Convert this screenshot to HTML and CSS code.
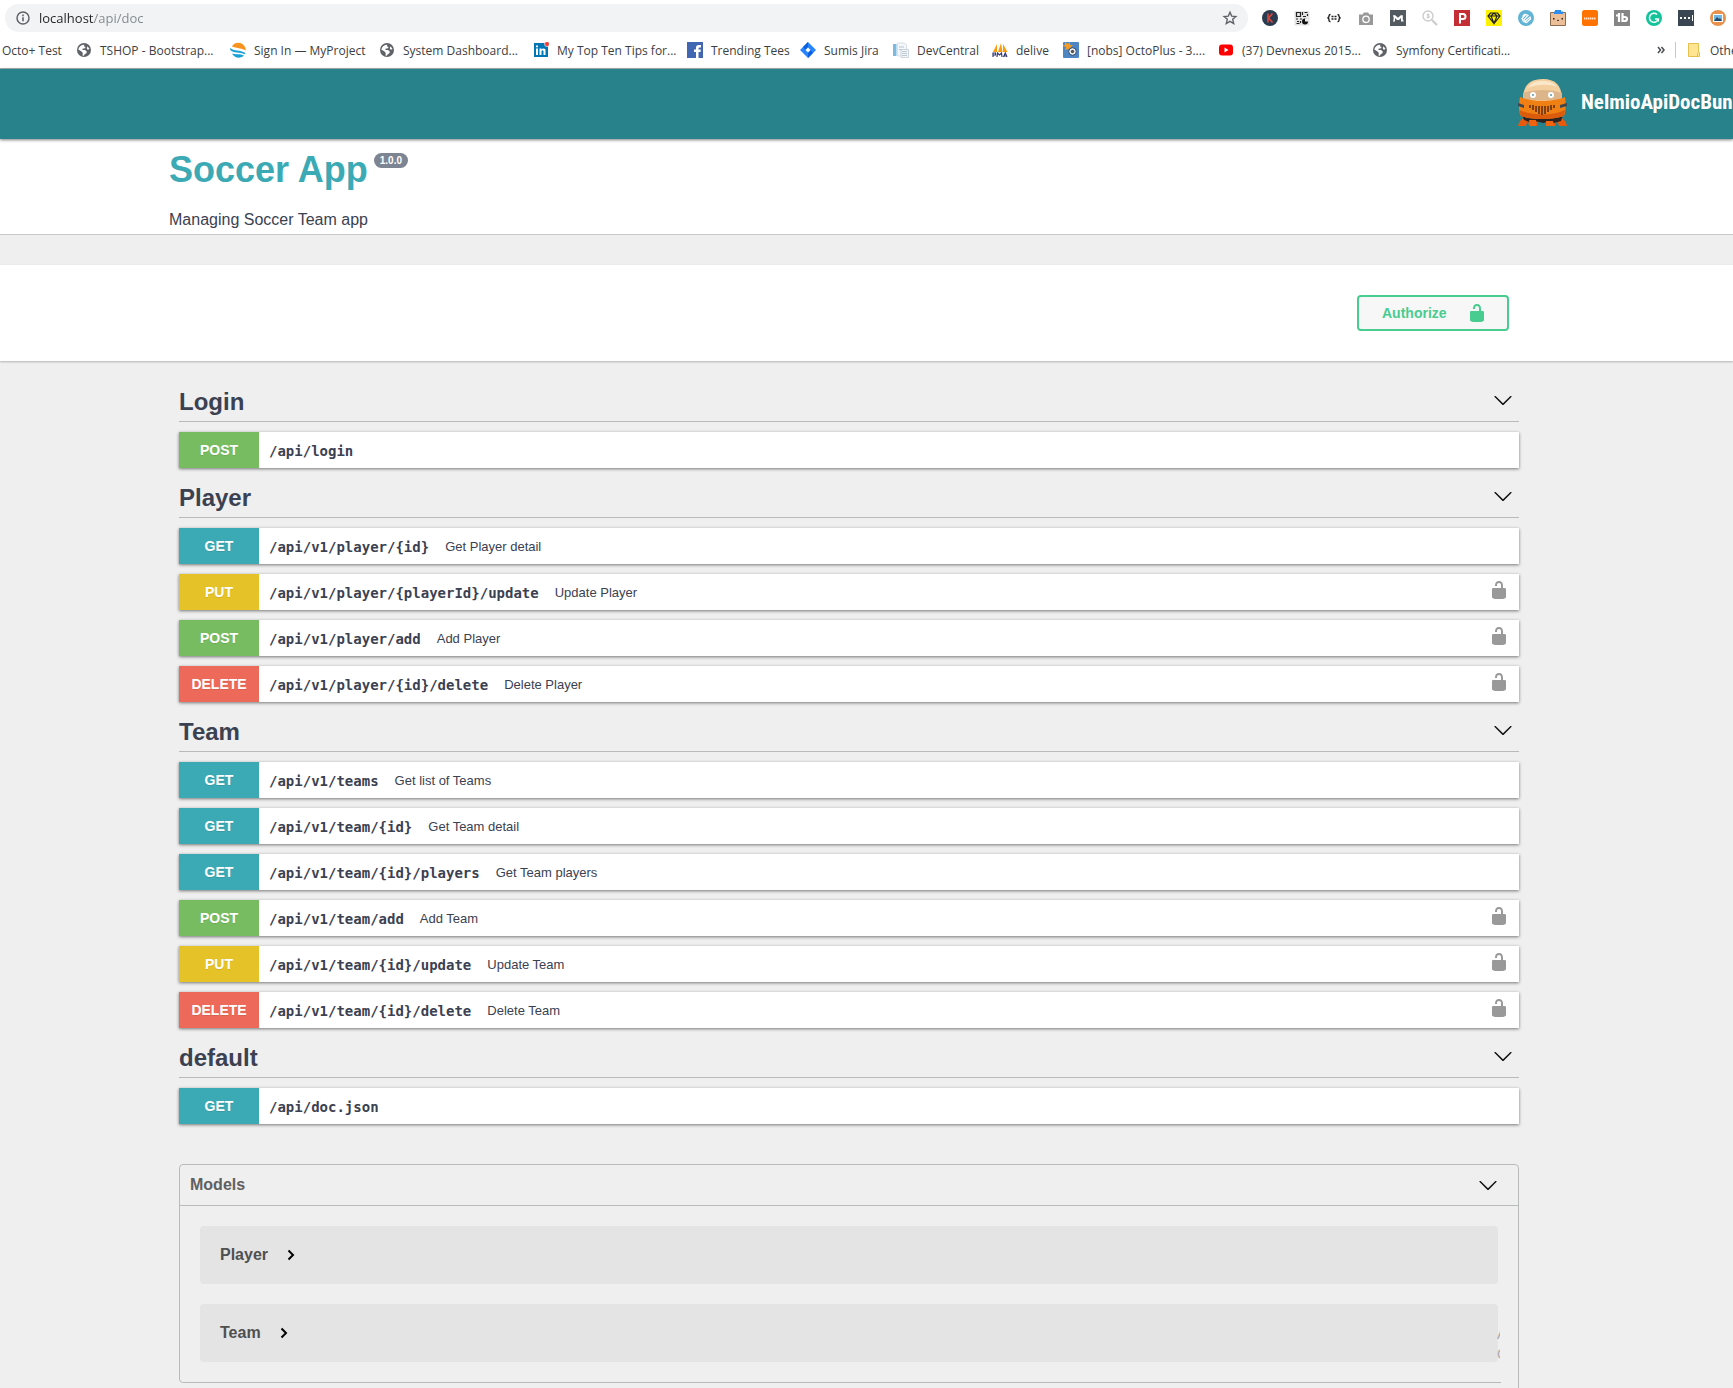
FILE: index.html
```html
<!DOCTYPE html>
<html lang="en">
<head>
<meta charset="utf-8">
<title>Soccer App</title>
<link rel="stylesheet" href="styles.css">
</head>
<body>
<svg class="sprite" aria-hidden="true">
  <symbol id="unlocked" viewBox="0 0 20 20"><path d="M15.8 8H14V5.6C14 2.703 12.665 1 10 1 7.334 1 6 2.703 6 5.6V6h2v-.801C8 3.754 8.797 3 10 3c1.203 0 2 .754 2 2.199V8H4c-.553 0-1 .646-1 1.199V17c0 .549.428 1.139.951 1.307l1.197.387C5.672 18.861 6.55 19 7.1 19h5.8c.549 0 1.428-.139 1.951-.307l1.196-.387c.524-.167.953-.757.953-1.306V9.199C17 8.646 16.352 8 15.8 8z"/></symbol>
  <symbol id="arrow-down" viewBox="0 0 20 20"><path d="M17.418 6.109c.272-.268.709-.268.979 0s.271.701 0 .969l-7.908 7.83c-.27.268-.707.268-.979 0l-7.908-7.83c-.27-.268-.27-.701 0-.969.271-.268.709-.268.979 0L10 13.25l7.418-7.141z"/></symbol>
  <symbol id="arrow-right" viewBox="0 0 10 12"><path d="M2.500 1.500 7 6l-4.500 4.500" fill="none" stroke="#000" stroke-width="2"/></symbol>
  <symbol id="globe" viewBox="0 0 16 16"><circle cx="8" cy="8" r="7" fill="#5f6368"/><path d="M2.300 7.500C3 4.500 5.500 2.600 8.500 2.700L7.800 4.200 9.500 5 9 6.300 6.500 6.800 6.400 8H9l1.800 1.500-.4 1.800-2 1.200-.4 1.300-1.500-.4.3-2.300-1.600-1.800z" fill="#fff"/><path d="M11.500 4.300 13.500 7l-1.700.8-1-1.300z" fill="#fff"/></symbol>
</svg>

<div class="browser">
  <div class="toolbar">
    <div class="omnibox">
      <svg class="icon16" viewBox="0 0 16 16"><circle cx="8" cy="8" r="6" fill="none" stroke="#5f6368" stroke-width="1.500"/><path d="M7.200 7.200h1.600v4H7.200zM7.200 4.600h1.600v1.600H7.200z" fill="#5f6368"/></svg>
      <input class="url" type="text" aria-label="Address" value="localhost/api/doc">
      <svg class="icon16" viewBox="0 0 16 16"><path d="M8 2.200 9.700 6.100l4.200.4-3.200 2.800 1 4.200L8 11.300l-3.700 2.200 1-4.200L2.100 6.500l4.200-.4z" fill="none" stroke="#5f6368" stroke-width="1.400"/></svg>
    </div>
    <div class="extensions">
      <svg class="icon16" viewBox="0 0 16 16"><circle cx="8" cy="8" r="8" fill="#2a3b4f"/><path d="M6 3.500v9M10.500 3.500 6.500 8l4 4.500" fill="none" stroke="#d9483f" stroke-width="1.600"/></svg>
      <svg class="icon16" viewBox="0 0 16 16"><path d="M.5 1h15v14.500H.5z" fill="#e4e4e4"/><path d="M2.500 2.500h4v4h-4zM8.500 2v3M10.500 2.500h3M13.500 4v2M9 6.500h3M2 9h2M6 9h2M3 11.500h2M2.500 13.500h3M6.500 11v2" fill="none" stroke="#222" stroke-width="1.200"/><circle cx="11" cy="11.500" r="3" fill="#111"/><path d="M11 8.500h3v3h-3z" fill="#eee"/></svg>
      <svg class="icon16" viewBox="0 0 16 16"><path d="M4.500 4.500Q3 4.500 3 6t-1.500 2Q3 8 3 10t1.500 1.500M11.500 4.500Q13 4.500 13 6t1.500 2Q13 8 13 10t-1.500 1.500M5.500 6.500h2M8.500 6.500h2M5.500 9h2M8.500 9h2" fill="none" stroke="#222" stroke-width="1.400"/></svg>
      <svg class="icon16" viewBox="0 0 16 16"><path d="M1 4.500h3.500L6 2.500h4l1.500 2H15V15H1z" fill="#999"/><circle cx="8" cy="9.300" r="3.200" fill="#999" stroke="#fff" stroke-width="1.300"/></svg>
      <svg class="icon16" viewBox="0 0 16 16"><path d="M0 0h16v16H0z" fill="#545b60"/><path d="M3 11.500h2V8l2 2h2l2-2v3.500h2.500v-1.200h-.7v-5h-2L8 7.800 5.200 5.300H3v1.200h.6v4H3z" fill="#fff"/></svg>
      <svg class="icon16" viewBox="0 0 16 16"><circle cx="6" cy="6" r="5" fill="none" stroke="#ccc" stroke-width="1.400"/><path d="m10 10 5 5" stroke="#ccc" stroke-width="2.200"/><path d="M7.600 4.500H5.400v1.500h1.800v1.600H4.600M6 3.300v5.400" fill="none" stroke="#ccc"/></svg>
      <svg class="icon16" viewBox="0 0 16 16"><path d="M0 0h16v16H0z" fill="#c32f35"/><path d="M6 13.500V4h3q2.500 0 2.500 2.500T9 9H6" fill="none" stroke="#fff" stroke-width="2"/></svg>
      <svg class="icon16" viewBox="0 0 16 16"><path d="M0 0h16v16H0z" fill="#fff200"/><path d="M4.500 3h7L14 6l-6 7.500L2 6zM2 6h12M5 6l3 7.500L11 6 8 3 5 6" fill="none" stroke="#222" stroke-width="1.200"/></svg>
      <svg class="icon16" viewBox="0 0 16 16"><circle cx="8" cy="8" r="8" fill="#62b4d6"/><path d="m4 8.500 4-4 2 1-4 4 1.500 1.500 4.500-4 .5 2-4 3.500-3-1zM4.500 6.500 7 4" fill="none" stroke="#fff" stroke-width="1.200"/></svg>
      <svg class="icon16" viewBox="0 0 16 16"><path d="M.5 2.500h15v13H.5z" fill="#edbf98" stroke="#8d6c50"/><path d="M5 0h6v1.500h2V4H4V1.500h1z" fill="#2d8cf0"/><path d="M3 8h1.500v1.500H3zM11.500 8H13v1.500h-1.500z" fill="#222"/><path d="m7 10 1 .8 1-.8" fill="none" stroke="#333"/></svg>
      <svg class="icon16" viewBox="0 0 16 16"><rect width="16" height="16" rx="2.500" fill="#ff7300"/><path d="M2 8.500h12" stroke="#ffe3cc" stroke-width="2" stroke-dasharray="1.500 .5"/></svg>
      <svg class="icon16" viewBox="0 0 16 16"><path d="M0 0h16v16H0z" fill="#858585"/><path d="M2 5.500h3M5 3v9M8.500 3v8h2q2.500 0 2.500-2T10.500 7H8.500" fill="none" stroke="#fff" stroke-width="2.200"/></svg>
      <svg class="icon16" viewBox="0 0 16 16"><circle cx="8" cy="8" r="8" fill="#15c39a"/><path d="M11 4.500A4.500 4.500 0 1 0 12.300 9H9M12.300 8.500v3" fill="none" stroke="#fff" stroke-width="1.500"/></svg>
      <svg class="icon16" viewBox="0 0 16 16"><path d="M0 0h16v16H0z" fill="#3a4651"/><path d="M2 7h2v2H2zM6 7h2v2H6zM10 7h2v2h-2zM14 5h1v6h-1z" fill="#fff"/></svg>
      <svg class="icon16" viewBox="0 0 16 16"><circle cx="8" cy="8" r="8" fill="#e8924d"/><path d="M3 4h10v8H3z" fill="#fff"/><path d="M4 5h8v6H4z" fill="#6fb7e4"/><path d="m4 11 3-4 2 2 1-1 2 3z" fill="#24476b"/></svg>
    </div>
  </div>
  <nav class="bookmarks">
    <a class="bookmark" href="#">Octo+ Test</a>
    <a class="bookmark" href="#"><svg class="icon16"><use href="#globe"/></svg>TSHOP - Bootstrap...</a>
    <a class="bookmark" href="#"><svg class="icon16" viewBox="0 0 16 16"><path d="M2 4.500C4-.5 13-1 15.500 6c.3 1 .2 2 0 2.500C11 5.500 6 6.500 2 4.500z" fill="#f7931e"/><path d="M0 6c4 3.500 10 1.500 15.500 5l-.8 1.300C10 9.500 3 11.500.3 8zM2 11.500c4 1.500 8-.5 12 2-3 3.200-9 3.200-12-2z" fill="#1ba1d6"/></svg>Sign In — MyProject</a>
    <a class="bookmark" href="#"><svg class="icon16"><use href="#globe"/></svg>System Dashboard...</a>
    <a class="bookmark" href="#"><svg class="icon16" viewBox="0 0 16 16"><path d="M1 1h14v14H1z" fill="#0077b5"/><path d="M3 6.500h2V13H3zM3 3.500h2v1.800H3zM6.500 6.500h2v1q2-2 4 0V13h-2V9q-1-1.300-2 0v4h-2z" fill="#fff"/><circle cx="14" cy="2" r="2.500" fill="#f33c36" stroke="#fff" stroke-width=".6"/></svg>My Top Ten Tips for...</a>
    <a class="bookmark" href="#"><svg class="icon16" viewBox="0 0 16 16"><path d="M0 0h16v16H0z" fill="#4267b2"/><path d="M9 16V10H7V7.500h2V5.800Q9 3 11.800 3H14v2.400h-1.300q-1.200 0-1.200 1v1.100h2.400l-.4 2.500h-2v6z" fill="#fff"/></svg>Trending Tees</a>
    <a class="bookmark" href="#"><svg class="icon16" viewBox="0 0 16 16"><path d="m8 0 8 8-8 8-8-8z" fill="#2684ff"/><path d="M8 0v5L5.500 8 3 5zM8 16v-5l2.500-3 2.500 3z" fill="#0b5fe0"/><path d="m8 5.500 2.500 2.500L8 10.500 5.500 8z" fill="#fff"/></svg>Sumis Jira</a>
    <a class="bookmark" href="#"><svg class="icon16" viewBox="0 0 16 16"><path d="M0 2h3.500v12H0z" fill="#7db8df"/><path d="M4.500 1h7l2 2v11h-9z" fill="#f4f6f8" stroke="#ccd5de" stroke-width=".7"/><path d="M6 5h5M6 7.500h2" stroke="#b9c6d2"/><path d="M8 7.500h7.500v8H8z" fill="#f4f6f8" stroke="#b9c6d2" stroke-width=".7"/><path d="M9 9.500h5M9 11.500h5M9 13.500h5" stroke="#aebccb" stroke-width=".8"/></svg>DevCentral</a>
    <a class="bookmark" href="#"><svg class="icon16" viewBox="0 0 16 16"><path d="M1 10 5 2v8zM6 10l3-9 1.500 9zM11 10V2l4.500 8z" fill="#f89c0e"/><path d="M1 15v-4h2.500v2H1M5 15l.5-4L7.500 13l2-2 .5 4M11.500 15l1.800-4 1.700 4M12 14h3" fill="none" stroke="#353a73" stroke-width="1.200"/></svg>delive</a>
    <a class="bookmark" href="#"><svg class="icon16" viewBox="0 0 16 16"><rect width="16" height="16" rx="1" fill="#4e86c4"/><path d="M0 3h2V0l3 2 2-2v3h3L7 6l1 3-3-2-3 1 1-3-3-1z" fill="#f59a23"/><circle cx="9.500" cy="9.500" r="3.800" fill="#f1f1f1" stroke="#29486c"/><circle cx="9.500" cy="9.500" r="1.700" fill="#555"/></svg>[nobs] OctoPlus - 3....</a>
    <a class="bookmark" href="#"><svg class="icon16" viewBox="0 0 16 16"><rect x="1" y="2.500" width="14" height="11" rx="3" fill="#f00"/><path d="m6.500 5.500 4 2.500-4 2.500z" fill="#fff"/></svg>(37) Devnexus 2015...</a>
    <a class="bookmark" href="#"><svg class="icon16"><use href="#globe"/></svg>Symfony Certificati...</a>
    <svg class="more" viewBox="0 0 8 8"><path d="m1 1 2.500 3L1 7M4.500 1 7 4 4.500 7" fill="none" stroke="#4a4d51" stroke-width="1.500"/></svg>
    <a class="bookmark other" href="#"><svg class="folder" viewBox="0 0 12 14"><path d="M.5.500h10v9h1v4H.5z" fill="#ffe591" stroke="#e5c04d"/><path d="M9.500 10v3.500" stroke="#e5c04d"/></svg>Othe</a>
  </nav>
</div>

<header class="banner">
  <a class="brand" href="#">
    <svg class="robot" viewBox="0 0 49 47">
      <path d="M0 47C1 42 4 39 9 37h31c5 2 8 5 9 10h-8l-2-6-2 6h-8l-1-5h-8l-1 5h-8l-1-6-2 6z" fill="#e8590c"/>
      <path d="M3 33h43l-3 9-7 2-3-2-8 2-8-2-3 2-8-3z" fill="#2b2321"/>
      <path d="M11 41h7v6h-6zM28 42h7l1 5h-8z" fill="#f0640f"/>
      <path d="M5 18C6 5 13 0 25 0s18 6 19 18l-2 5H7z" fill="#f3cf9f"/>
      <path d="M10 9C13 3 18 2 25 2s11 2 14 6c-8-3-20-3-29 1z" fill="#fae6c8"/>
      <path d="M5 14C16 10 33 10 44 14l-1 7H6z" fill="#dcb58a"/>
      <path d="M2 18C13 23 36 23 47 18c1 7 1 14-1 19-12 4-31 4-43 0C0 32 1 25 2 18z" fill="#f08013"/>
      <path d="M1 31c14 6 33 6 46 0l-1 6c-12 4-31 4-43 0z" fill="#d95b0b"/>
      <circle cx="15" cy="16" r="3" fill="#fff"/><circle cx="33" cy="16" r="3" fill="#fff"/><circle cx="15" cy="16" r="1" fill="#5c98a0"/><circle cx="33" cy="16" r="1" fill="#5c98a0"/>
      <path d="M12 26v3M15 26v5M18 27v6M21 27v8M24 27v9M27 27v8M30 27v6M33 26v5M36 26v3" stroke="#5a2b12" stroke-width="1.500"/>
      <path d="m0 24 6 2v3l-6-2zM49 24l-7 2v3l7-2z" fill="#3e4750"/>
    </svg>
    <span>NelmioApiDocBun</span>
  </a>
</header>

<section class="info">
  <h1 class="title">Soccer App <small class="version">1.0.0</small></h1>
  <p class="description">Managing Soccer Team app</p>
</section>

<section class="schemes">
  <button class="authorize" type="button">Authorize<svg class="icon20"><use href="#unlocked"/></svg></button>
</section>

<main class="content">
  <section class="tag">
    <h2 class="tag-header">Login<button class="toggle" type="button" aria-label="Collapse Login"><svg class="icon20"><use href="#arrow-down"/></svg></button></h2>
    <div class="operation"><span class="method post">POST</span><a class="path" href="#">/api/login</a></div>
  </section>

  <section class="tag">
    <h2 class="tag-header">Player<button class="toggle" type="button" aria-label="Collapse Player"><svg class="icon20"><use href="#arrow-down"/></svg></button></h2>
    <div class="operation"><span class="method get">GET</span><a class="path" href="#">/api/v1/player/{id}</a><span class="summary">Get Player detail</span></div>
    <div class="operation"><span class="method put">PUT</span><a class="path" href="#">/api/v1/player/{playerId}/update</a><span class="summary">Update Player</span><button class="lock" type="button" aria-label="Authorize"><svg class="icon20"><use href="#unlocked"/></svg></button></div>
    <div class="operation"><span class="method post">POST</span><a class="path" href="#">/api/v1/player/add</a><span class="summary">Add Player</span><button class="lock" type="button" aria-label="Authorize"><svg class="icon20"><use href="#unlocked"/></svg></button></div>
    <div class="operation"><span class="method delete">DELETE</span><a class="path" href="#">/api/v1/player/{id}/delete</a><span class="summary">Delete Player</span><button class="lock" type="button" aria-label="Authorize"><svg class="icon20"><use href="#unlocked"/></svg></button></div>
  </section>

  <section class="tag">
    <h2 class="tag-header">Team<button class="toggle" type="button" aria-label="Collapse Team"><svg class="icon20"><use href="#arrow-down"/></svg></button></h2>
    <div class="operation"><span class="method get">GET</span><a class="path" href="#">/api/v1/teams</a><span class="summary">Get list of Teams</span></div>
    <div class="operation"><span class="method get">GET</span><a class="path" href="#">/api/v1/team/{id}</a><span class="summary">Get Team detail</span></div>
    <div class="operation"><span class="method get">GET</span><a class="path" href="#">/api/v1/team/{id}/players</a><span class="summary">Get Team players</span></div>
    <div class="operation"><span class="method post">POST</span><a class="path" href="#">/api/v1/team/add</a><span class="summary">Add Team</span><button class="lock" type="button" aria-label="Authorize"><svg class="icon20"><use href="#unlocked"/></svg></button></div>
    <div class="operation"><span class="method put">PUT</span><a class="path" href="#">/api/v1/team/{id}/update</a><span class="summary">Update Team</span><button class="lock" type="button" aria-label="Authorize"><svg class="icon20"><use href="#unlocked"/></svg></button></div>
    <div class="operation"><span class="method delete">DELETE</span><a class="path" href="#">/api/v1/team/{id}/delete</a><span class="summary">Delete Team</span><button class="lock" type="button" aria-label="Authorize"><svg class="icon20"><use href="#unlocked"/></svg></button></div>
  </section>

  <section class="tag">
    <h2 class="tag-header">default<button class="toggle" type="button" aria-label="Collapse default"><svg class="icon20"><use href="#arrow-down"/></svg></button></h2>
    <div class="operation"><span class="method get">GET</span><a class="path" href="#">/api/doc.json</a></div>
  </section>

  <section class="models">
    <h3 class="models-header">Models<button class="toggle" type="button" aria-label="Collapse Models"><svg class="icon20"><use href="#arrow-down"/></svg></button></h3>
    <div class="models-body">
      <button class="model" type="button">Player<svg class="caret"><use href="#arrow-right"/></svg></button>
      <button class="model" type="button">Team<svg class="caret"><use href="#arrow-right"/></svg></button>
    </div>
    <div class="corner"></div>
    <div class="watermark">A<br>G</div>
  </section>
</main>
</body>
</html>
```
FILE: styles.css
```css
* {
  box-sizing: border-box;
}

body {
  margin: 0;
  min-height: 100vh;
  overflow-x: hidden;
  background: #efefef;
  color: #3b4151;
  font-family: "Liberation Sans", Arial, sans-serif;
}

h1, h2, h3, p {
  margin: 0;
}

a {
  color: inherit;
  text-decoration: none;
}

button {
  margin: 0;
  padding: 0;
  border: 0;
  background: none;
  color: inherit;
  font: inherit;
}

svg {
  display: block;
  flex: none;
  fill: currentColor;
}

.sprite {
  position: absolute;
  width: 0;
  height: 0;
}

.icon16 {
  width: 16px;
  height: 16px;
}

.icon20 {
  width: 20px;
  height: 20px;
}

/* Browser bar */

.browser {
  height: 69px;
  padding-top: 4px;
  border-bottom: 1px solid #adb0b1;
  background: #fff;
  color: #3c4043;
  font-family: "Open Sans", "Noto Sans", sans-serif;
  font-size: 12px;
}

.toolbar {
  display: flex;
  align-items: center;
  padding: 0 7px 0 5px;
  gap: 14px;
}

.omnibox {
  display: flex;
  flex: 1;
  align-items: center;
  height: 28px;
  padding: 0 10px;
  border-radius: 14px;
  background: #f1f3f4;
}

.url {
  flex: 1;
  min-width: 0;
  padding: 0 8px;
  border: 0;
  background: linear-gradient(90deg, #202124 63px, #80868b 63px);
  background-clip: text;
  color: transparent;
  font: 13px/20px "Open Sans", "Noto Sans", sans-serif;
}

.extensions {
  display: flex;
  gap: 16px;
}

.bookmarks {
  display: grid;
  grid-template-columns: 74px 154px 149px 154px 154px 113px 93px 99px 71px 155px 154px 1fr 8px 68px;
  align-items: center;
  height: 36px;
  padding-left: 2px;
}

.bookmark {
  display: flex;
  align-items: center;
  gap: 8px;
  white-space: nowrap;
}

.other {
  height: 16px;
  margin-left: 10px;
  padding-left: 12px;
  border-left: 1px solid #c6c8ca;
  gap: 10px;
}

.more {
  width: 8px;
  height: 8px;
}

.folder {
  width: 12px;
  height: 14px;
}

/* Page header */

.banner {
  position: relative;
  display: flex;
  justify-content: flex-end;
  height: 70px;
  background: #27828c;
  box-shadow: 0 1px 3px rgba(0, 0, 0, .5);
}

.brand {
  display: flex;
  align-items: center;
  gap: 14px;
  width: 215px;
  padding-bottom: 4px;
  color: #fff;
  font: bold 21px/32px "Roboto Condensed", "Liberation Sans Narrow", "Liberation Sans", sans-serif;
  white-space: nowrap;
}

.robot {
  width: 49px;
  height: 47px;
}

.info {
  height: 96px;
  padding: 11px 169px 0;
  border-bottom: 1px solid #c6c9c8;
  background: #fff;
}

.title {
  display: flex;
  align-items: flex-start;
  gap: 6px;
  color: #3caab5;
  font-size: 36px;
  line-height: 40px;
}

.version {
  margin-top: 3px;
  padding: 0 6px;
  border-radius: 8px;
  background: #7d8492;
  color: #fff;
  font-size: 10px;
  line-height: 15px;
}

.description {
  margin-top: 20px;
  font-size: 16px;
  line-height: 20px;
}

.schemes {
  display: flex;
  justify-content: flex-end;
  margin-top: 30px;
  padding: 30px 224px 30px 168px;
  background: #fff;
  box-shadow: 0 1px 2px rgba(0, 0, 0, .25);
}

.authorize {
  display: flex;
  align-items: center;
  justify-content: space-between;
  width: 152px;
  height: 36px;
  padding: 0 20px 0 23px;
  border: 2px solid #49cc90;
  border-radius: 4px;
  background: #f7f7f7;
  color: #49cc90;
  font-size: 14px;
  font-weight: bold;
}

/* Operations */

.content {
  padding: 11px 214px 6px 179px;
}

.tag {
  display: flex;
  flex-direction: column;
  gap: 10px;
}

.tag-header {
  display: flex;
  align-items: center;
  justify-content: space-between;
  height: 50px;
  padding: 10px 6px 0 0;
  border-bottom: 1px solid #b9bbbb;
  font-size: 24px;
  line-height: 28px;
}

.toggle {
  color: #111;
}

.tag-header .toggle {
  padding-bottom: 4px;
}

.operation {
  display: flex;
  align-items: center;
  height: 36px;
  padding-right: 10px;
  background: #fff;
  box-shadow: 0 1px 3px rgba(0, 0, 0, .5);
}

.method {
  width: 80px;
  color: #fff;
  font-size: 14px;
  font-weight: bold;
  line-height: 36px;
  text-align: center;
  text-shadow: 0 1px 0 rgba(0, 0, 0, .1);
}

.get {
  background: #3caab5;
}

.post {
  background: #78bc61;
}

.put {
  background: #e6c229;
}

.delete {
  background: #ed6a5a;
}

.path {
  padding: 2px 16px 0 10px;
  font: bold 14px/20px "DejaVu Sans Mono", monospace;
}

.summary {
  flex: 1;
  font-size: 13px;
}

.lock {
  padding-bottom: 4px;
  color: #999;
}

/* Models */

.models {
  position: relative;
  margin-top: 40px;
  border: 1px solid #b9bbbb;
  border-radius: 4px;
  color: #505050;
}

.models-header {
  display: flex;
  align-items: center;
  justify-content: space-between;
  height: 41px;
  padding: 0 20px 0 10px;
  border-bottom: 1px solid #b9bbbb;
  color: #606060;
  font-size: 16px;
}

.models-body {
  display: grid;
  gap: 20px;
  padding: 20px;
}

.model {
  display: flex;
  align-items: center;
  gap: 18px;
  height: 58px;
  padding: 0 20px;
  border-radius: 4px;
  background: #e4e4e4;
  font-weight: bold;
}

.caret {
  width: 10px;
  height: 12px;
}

/* Covers the lower right corner, where the side border runs on */
.corner {
  position: absolute;
  right: -1px;
  bottom: -7px;
  width: 18px;
  height: 16px;
  border-right: 1px solid #b9bbbb;
  background: #efefef;
}

.watermark {
  position: absolute;
  right: 18px;
  bottom: 18px;
  width: 3px;
  color: #aaa;
  font-size: 14px;
  line-height: 20px;
  overflow: hidden;
}
```
